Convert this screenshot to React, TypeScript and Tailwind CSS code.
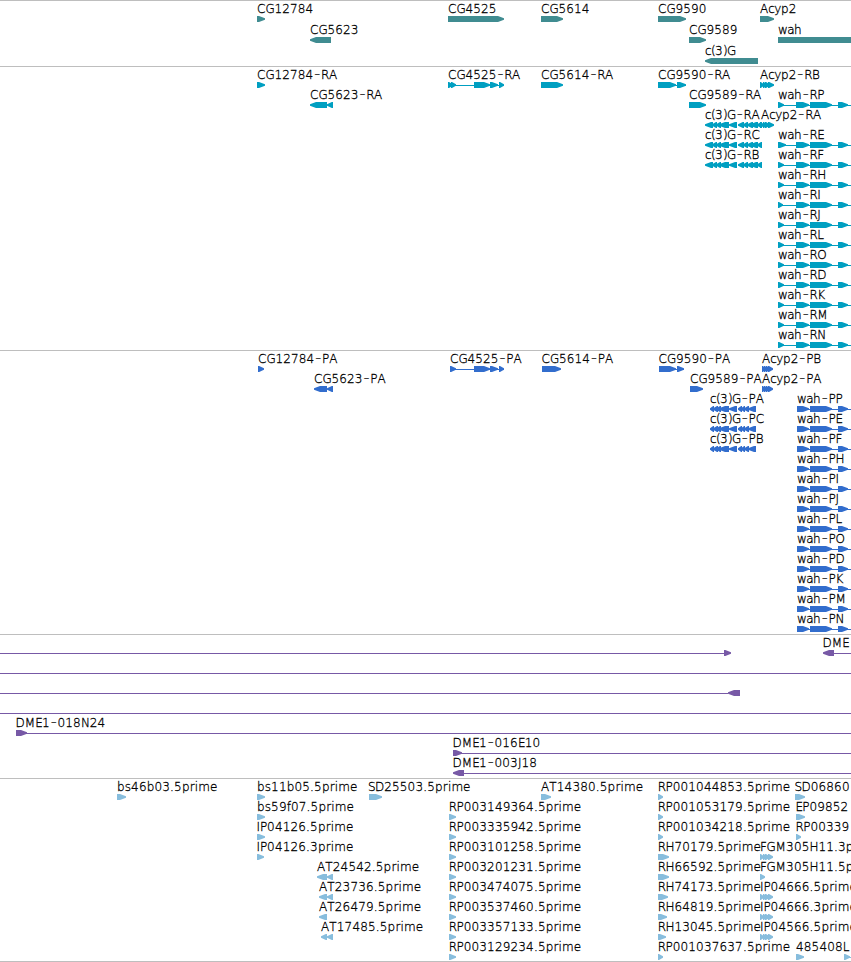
type Dir = "r" | "l";
type Block = [start: number, end: number];

interface Feature {
  row: number;
  x: number;
  label?: string;
  dir?: Dir;
  blocks?: Block[];
  line?: Block;
}

interface TrackProps {
  height: number;
  rowHeight?: number;
  color: string;
  features: Feature[];
}

const WIDTH = 851;

// glyph advances in px, digits and anything missing are 7.8
const ADVANCES: Record<string, number> = {
  A: 8.2, C: 8.4, D: 9.2, E: 6.8, F: 6.6, G: 9, H: 8.9, I: 3.5, J: 3.5, K: 7.7,
  L: 6.5, M: 10.5, N: 8.9, O: 9.3, P: 7.1, R: 7.8, S: 7, T: 7.6,
  a: 6.8, c: 6.1, e: 6.8, f: 4.3, i: 3.5, m: 11.7, r: 5.1, s: 6.3, w: 9.2,
  y: 6.6, "(": 4, ")": 4, ".": 4, "-": 7.7,
};

const glyphPositions = (label: string, start: number) => {
  let x = start;
  return label
    .split("")
    .map((char) => {
      const at = char === "-" ? x + 0.6 : x;
      x += ADVANCES[char] ?? 7.8;
      return at.toFixed(1);
    })
    .join(" ");
};

const arrowPoints = ([start, end]: Block, y: number, dir: Dir) => {
  const head = Math.min((end - start) * 0.8, 6);
  const tip = dir === "r" ? end : start;
  const neck = dir === "r" ? end - head : start + head;
  const back = dir === "r" ? start : end;
  return `${back},${y} ${neck},${y} ${tip},${y + 2.3} ${tip},${y + 3.7} ${neck},${y + 6} ${back},${y + 6}`;
};

const Label = ({ text, x, y }: { text: string; x: number; y: number }) => {
  const [name, suffix] = text.split("-");
  return (
    <text x={glyphPositions(text, x)} y={y} className="fill-black stroke-black [stroke-width:0.3px]">
      {name}
      {suffix && <tspan className="text-[18px] [stroke-width:0]">-</tspan>}
      {suffix}
    </text>
  );
};

const Track = ({ height, rowHeight = 20, color, features }: TrackProps) => (
  <div className="border-t border-[#bebebe]">
    <svg width={WIDTH} height={height - 1} className={`block overflow-visible ${color}`}>
      {features.map((feature, i) => {
        const y = 15 + feature.row * rowHeight;
        return (
          <g key={i}>
            {feature.line && (
              <rect
                x={feature.line[0]}
                y={y + 3}
                width={feature.line[1] - feature.line[0]}
                height={1}
                fill="currentColor"
              />
            )}
            {feature.blocks?.map((block) => (
              <polygon
                key={block[0]}
                points={arrowPoints(block, y, feature.dir ?? "r")}
                fill="currentColor"
              />
            ))}
            {feature.label && <Label text={feature.label} x={feature.x} y={y - 3} />}
          </g>
        );
      })}
    </svg>
  </div>
);

const genes: Feature[] = [
  { row: 0, x: 257, label: "CG12784", blocks: [[257, 265]] },
  { row: 1, x: 310, label: "CG5623", dir: "l", blocks: [[310, 331]] },
  { row: 0, x: 448, label: "CG4525", blocks: [[448, 504]] },
  { row: 0, x: 541, label: "CG5614", blocks: [[541, 563]] },
  { row: 0, x: 658, label: "CG9590", blocks: [[658, 686]] },
  { row: 1, x: 689, label: "CG9589", blocks: [[689, 706]] },
  { row: 2, x: 705, label: "c(3)G", dir: "l", blocks: [[705, 758]] },
  { row: 0, x: 760, label: "Acyp2", blocks: [[760, 774]] },
  { row: 1, x: 778, label: "wah", blocks: [[778, 880]] },
];

const c3gRnaBlocks: Block[] = [
  [705, 713], [712, 717], [716, 721], [719, 729], [729, 737], [738, 744], [743, 748], [747, 753], [750, 758], [757, 762],
];

const wahRna = [
  { id: "RP", row: 1, utr: 784 },
  { id: "RE", row: 3, utr: 786 },
  { id: "RF", row: 4, utr: 784 },
  { id: "RH", row: 5, utr: 784 },
  { id: "RI", row: 6, utr: 783 },
  { id: "RJ", row: 7, utr: 784 },
  { id: "RL", row: 8, utr: 784 },
  { id: "RO", row: 9, utr: 784 },
  { id: "RD", row: 10, utr: 784 },
  { id: "RK", row: 11, utr: 784 },
  { id: "RM", row: 12, utr: 784 },
  { id: "RN", row: 13, utr: 784 },
];

const acypRnaBlocks: Block[] = [[760, 764], [763, 767], [765, 770], [768, 774]];

const transcripts: Feature[] = [
  { row: 0, x: 257, label: "CG12784-RA", blocks: [[257, 265]] },
  { row: 1, x: 310, label: "CG5623-RA", dir: "l", blocks: [[310, 327], [327, 333]] },
  { row: 0, x: 448, label: "CG4525-RA", blocks: [[448, 453], [451, 456], [474, 490], [490, 498], [499, 504]], line: [448, 504] },
  { row: 0, x: 541, label: "CG5614-RA", blocks: [[541, 563]] },
  { row: 0, x: 658, label: "CG9590-RA", blocks: [[658, 676], [677, 686]], line: [658, 686] },
  { row: 1, x: 689, label: "CG9589-RA", blocks: [[689, 706]] },
  { row: 0, x: 760, label: "Acyp2-RB", blocks: acypRnaBlocks },
  { row: 2, x: 705, label: "c(3)G-RA", dir: "l", blocks: c3gRnaBlocks },
  { row: 2, x: 761, label: "Acyp2-RA", blocks: acypRnaBlocks },
  { row: 3, x: 705, label: "c(3)G-RC", dir: "l", blocks: c3gRnaBlocks },
  { row: 4, x: 705, label: "c(3)G-RB", dir: "l", blocks: c3gRnaBlocks },
  ...wahRna.map(({ id, row, utr }): Feature => ({
    row,
    x: 778,
    label: `wah-${id}`,
    blocks: [[778, utr], [796, 809], [810, 832], [838, 848]],
    line: [778, WIDTH],
  })),
];

const c3gProteinBlocks: Block[] = [
  [710, 714], [713, 718], [716, 721], [719, 729], [729, 737], [738, 742], [741, 745], [744, 749], [748, 756],
];
const acypProteinBlocks: Block[] = [[762, 766], [764, 768], [766, 770], [768, 773]];

const proteins: Feature[] = [
  { row: 0, x: 258, label: "CG12784-PA", blocks: [[258, 264]] },
  { row: 1, x: 314, label: "CG5623-PA", dir: "l", blocks: [[314, 327], [327, 333]] },
  { row: 0, x: 450, label: "CG4525-PA", blocks: [[450, 456], [474, 490], [490, 498], [499, 504]], line: [450, 504] },
  { row: 0, x: 541.5, label: "CG5614-PA", blocks: [[542, 561]] },
  { row: 0, x: 658.5, label: "CG9590-PA", blocks: [[659, 676], [677, 684]], line: [659, 684] },
  { row: 1, x: 690, label: "CG9589-PA", blocks: [[690, 703]] },
  { row: 0, x: 762, label: "Acyp2-PB", blocks: acypProteinBlocks },
  { row: 1, x: 762, label: "Acyp2-PA", blocks: acypProteinBlocks },
  ...["PA", "PC", "PB"].map((id, i): Feature => ({
    row: i + 2,
    x: 710,
    label: `c(3)G-${id}`,
    dir: "l",
    blocks: c3gProteinBlocks,
  })),
  ...["PP", "PE", "PF", "PH", "PI", "PJ", "PL", "PO", "PD", "PK", "PM", "PN"].map((id, i): Feature => ({
    row: i + 2,
    x: 797,
    label: `wah-${id}`,
    blocks: [[797, 809], [810, 832], [838, 848]],
    line: [797, WIDTH],
  })),
];

const clones: Feature[] = [
  { row: 0, x: 0, blocks: [[724, 731]], line: [0, 724] },
  { row: 0, x: 822.5, label: "DME", dir: "l", blocks: [[823, 834]], line: [834, WIDTH] },
  { row: 1, x: 0, line: [0, WIDTH] },
  { row: 2, x: 0, dir: "l", blocks: [[728, 740]], line: [0, 728] },
  { row: 3, x: 0, line: [0, WIDTH] },
  { row: 4, x: 15.5, label: "DME1-018N24", blocks: [[16, 27]], line: [16, WIDTH] },
  { row: 5, x: 452.5, label: "DME1-016E10", blocks: [[453, 462]], line: [453, WIDTH] },
  { row: 6, x: 452.5, label: "DME1-003J18", dir: "l", blocks: [[453, 464]], line: [464, WIDTH] },
];

const acypEstBlocks: Block[] = [[760, 764], [763, 767], [765, 770], [768, 773]];

const ests: Feature[] = [
  { row: 0, x: 117, label: "bs46b03.5prime", blocks: [[117, 126]] },
  { row: 0, x: 257, label: "bs11b05.5prime", blocks: [[257, 265]] },
  { row: 1, x: 257, label: "bs59f07.5prime", blocks: [[257, 265]] },
  { row: 2, x: 256.5, label: "IP04126.5prime", blocks: [[257, 265]] },
  { row: 3, x: 256.5, label: "IP04126.3prime", blocks: [[257, 264]] },
  { row: 4, x: 317, label: "AT24542.5prime", dir: "l", blocks: [[317, 327], [327, 333]] },
  { row: 5, x: 319, label: "AT23736.5prime", dir: "l", blocks: [[319, 327], [327, 333]] },
  { row: 6, x: 319, label: "AT26479.5prime", dir: "l", blocks: [[319, 327]] },
  { row: 7, x: 321, label: "AT17485.5prime", dir: "l", blocks: [[321, 327], [327, 333]] },
  { row: 0, x: 368, label: "SD25503.5prime", blocks: [[369, 382]] },
  { row: 0, x: 541, label: "AT14380.5prime", blocks: [[541, 551]] },
  ...[
    "RP003149364",
    "RP003335942",
    "RP003101258",
    "RP003201231",
    "RP003474075",
    "RP003537460",
    "RP003357133",
    "RP003129234",
  ].map((name, i): Feature => ({ row: i + 1, x: 448.8, label: `${name}.5prime`, blocks: [[449, 456]] })),
  { row: 0, x: 657.8, label: "RP001044853.5prime", blocks: [[658, 663]] },
  { row: 1, x: 657.8, label: "RP001053179.5prime", blocks: [[658, 663]] },
  { row: 2, x: 657.8, label: "RP001034218.5prime", blocks: [[658, 663]] },
  { row: 3, x: 657.8, label: "RH70179.5prime", blocks: [[658, 669]] },
  { row: 4, x: 657.8, label: "RH66592.5prime", blocks: [[658, 669]] },
  { row: 5, x: 657.8, label: "RH74173.5prime", blocks: [[658, 668]] },
  { row: 6, x: 657.8, label: "RH64819.5prime", blocks: [[658, 667]] },
  { row: 7, x: 657.8, label: "RH13045.5prime", blocks: [[658, 666]] },
  { row: 8, x: 657.8, label: "RP001037637.5prime", blocks: [[658, 663]] },
  { row: 0, x: 794.5, label: "SD06860", blocks: [[795, 805]] },
  { row: 1, x: 795.5, label: "EP09852", blocks: [[796, 805]] },
  { row: 2, x: 795.5, label: "RP00339", blocks: [[796, 801]] },
  { row: 3, x: 760, label: "FGM305H11.3p", blocks: acypEstBlocks },
  { row: 4, x: 760, label: "FGM305H11.5p", blocks: [[760, 765]] },
  { row: 5, x: 760, label: "IP04666.5prime", blocks: acypEstBlocks },
  { row: 6, x: 760, label: "IP04666.3prime", blocks: acypEstBlocks },
  { row: 7, x: 760, label: "IP04566.5prime", blocks: acypEstBlocks },
  { row: 8, x: 796, label: "485408L", blocks: [[796, 804]] },
  { row: 8, x: 844, blocks: [[844, 850]], line: [844, WIDTH] },
];

const App = () => {
  return (
    <div className="w-[851px] h-[962px] overflow-hidden bg-white text-[12px] font-extralight font-['DejaVu_Sans','DejaVu_Sans_Light',sans-serif]">
      <Track height={66} rowHeight={21} color="text-[#408c91]" features={genes} />
      <Track height={284} color="text-[#009fc1]" features={transcripts} />
      <Track height={284} color="text-[#326dcd]" features={proteins} />
      <Track height={144} color="text-[#7759a6]" features={clones} />
      <Track height={183} color="text-[#87bddd]" features={ests} />
      <div className="border-t border-[#bebebe]" />
    </div>
  );
};

export default App;
